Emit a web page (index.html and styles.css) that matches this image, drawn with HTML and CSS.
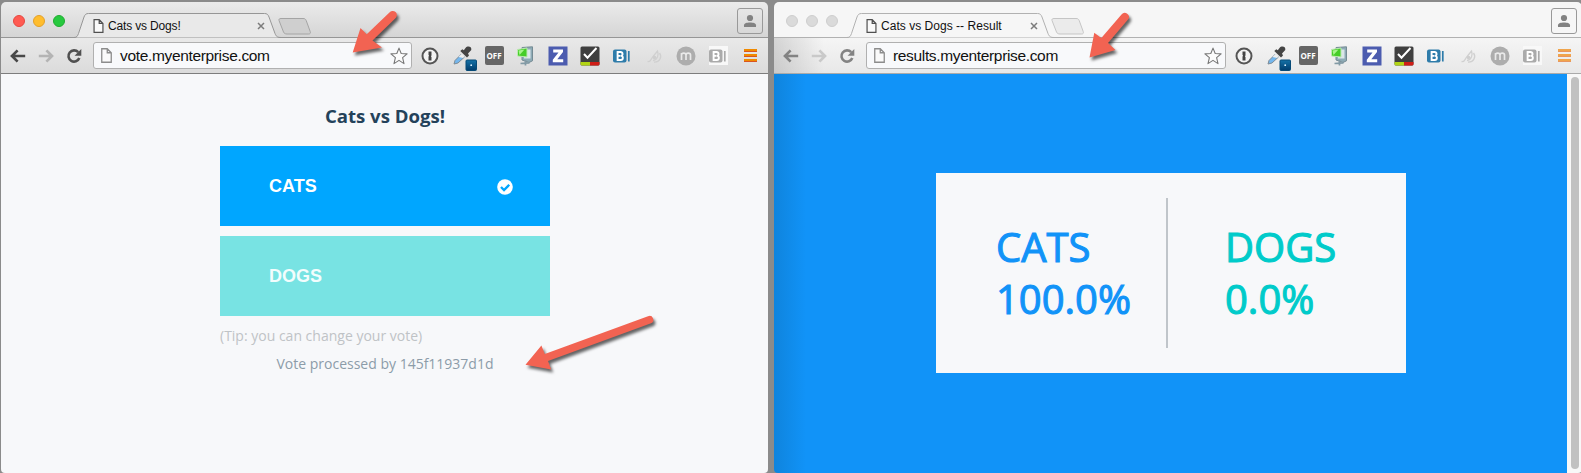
FILE: index.html
```html
<!DOCTYPE html>
<html lang="en">
<head>
<meta charset="utf-8">
<title>Cats vs Dogs!</title>
<link rel="stylesheet" href="styles.css">
</head>
<body>
<svg class="sprites" width="0" height="0">
  <defs>
    <linearGradient id="navy" x1="0" y1="0" x2="0" y2="1"><stop offset="0" stop-color="#1572a8"/><stop offset="1" stop-color="#003c6c"/></linearGradient>
  </defs>
  <symbol id="page" viewBox="0 0 11 15"><path d="M.75.75h5.500l4 4v9.500H.75zM6.250.75v4h4" fill="#fafafa" stroke="currentColor" stroke-width="1.300"/></symbol>
  <symbol id="close" viewBox="0 0 8 8"><path d="M1 1l6 6M7 1L1 7" stroke="#7c7c7c" stroke-width="1.500"/></symbol>
  <symbol id="back" viewBox="0 0 16 14"><path d="M15.200 7H2.500M7.600 1.400L2 7l5.600 5.600" fill="none" stroke="currentColor" stroke-width="2.700"/></symbol>
  <symbol id="reload" viewBox="0 0 16 16"><path d="M12.200 4.200A5.600 5.600 0 1 0 13.300 10" fill="none" stroke="currentColor" stroke-width="2.600"/><path d="M15.300 1v6.700H8.600z" fill="currentColor"/></symbol>
  <symbol id="star" viewBox="0 0 18 18"><path d="M9 1.100l2.200 5.400 5.900.4-4.500 3.800 1.400 5.900L9 13.400l-5 3.200 1.400-5.900L.9 6.900l5.900-.4z" fill="#fcfcfc" stroke="#777" stroke-width="1.100" stroke-linejoin="round"/></symbol>
  <symbol id="person" viewBox="0 0 14 14"><circle cx="7" cy="4" r="3.100" fill="#828282"/><path d="M1 13v-1.800C1 9.200 4 8.500 7 8.500s6 .7 6 2.700V13z" fill="#828282"/></symbol>
  <symbol id="onepass" viewBox="0 0 24 24"><circle cx="12" cy="12" r="7.500" fill="#f3f3f3" stroke="#555" stroke-width="2"/><path d="M10.500 7.500h3v4l-.7.700.7.800v3.500h-3v-4l.7-.8-.7-.7z" fill="#444"/></symbol>
  <symbol id="dropper" viewBox="0 0 28 28"><path d="M4 20l1-3.500 6.500-6.500 3 3L8 19z" fill="#74b7ee" stroke="#7d8b96" stroke-width="1"/><path d="M8.500 13l3.500-3.500 2.800 2.800-1.800 1.700z" fill="#eee"/><path d="M10.300 7l2-1.800 1.500 1L15.500 4c1.800-2.300 6.500-1.800 5.800 2L18 9.500l1 2-2 2z" fill="#454545"/><rect x="16" y="16" width="10.500" height="10.500" rx="1" fill="url(#navy)" stroke="#064a77"/><circle cx="21.200" cy="21.200" r=".9" fill="#dff3ff"/></symbol>
  <symbol id="disk" viewBox="0 0 24 24"><path d="M8 3.500l10.500-.7v14L15 18.500 8 16z" fill="#8eabb6" stroke="#758b94"/><path d="M10 5.500h6.500v9H10z" fill="#dbe6e9"/><path d="M3.500 5.500l9.500-1.500v9l-9.500-1z" fill="#45cd28" stroke="#bce9b1"/><path d="M4.500 6.500l6-1-5 5.500z" fill="#a6f48c"/><path d="M11.500 16v5.500M6.500 19.500l9-.6" stroke="#829aa5" stroke-width="1.700"/></symbol>
  <symbol id="zicon" viewBox="0 0 24 24"><path d="M2.500 2.500h19v19h-19z" fill="#4c5caf"/><path d="M7.200 5.500h9.800v2.600l-5.700 7.100h5.900v3.100H6.800v-2.600l5.700-7.100H7.200z" fill="#fff"/></symbol>
  <symbol id="check" viewBox="0 0 24 24"><rect x="2.500" y="2.500" width="19" height="19" rx="1.500" fill="#3f3f3f"/><path d="M2.500 18h9.500v3.500H3.500l-1-1z" fill="#b2d414"/><path d="M12 18h9.500v2.500l-1 1H12z" fill="#d01e17"/><path d="M6 10l3.500 3.800L18.500 4" fill="none" stroke="#fff" stroke-width="2"/></symbol>
  <symbol id="bline" viewBox="0 0 24 24"><rect x="3" y="5.500" width="13.500" height="13" rx="2" fill="currentColor"/><path d="M7.600 8v8h3.200c2.700 0 2.700-3.900.3-4.100 2-.3 2-3.900-.6-3.900zm0 3.900h3" fill="none" stroke="#fff" stroke-width="1.900"/><path d="M18.800 7v10.500" stroke="currentColor" stroke-width="1.700"/></symbol>
  <symbol id="faint" viewBox="0 0 24 24"><path d="M5.500 17.500c4 1 3-3 6-5.500l4-5c1.500 4 0 9-4.500 9.500M17.500 9c3 4 0 9.500-5.500 9" fill="none" stroke="#d0d0d0" stroke-width="1.300"/><circle cx="12.500" cy="13.500" r="1.800" fill="#cecece"/></symbol>
  <symbol id="micon" viewBox="0 0 24 24"><circle cx="12" cy="12" r="9.500" fill="#adadad"/><path d="M7.500 16V9M7.500 11c0-2.500 4.500-2.500 4.500 0v5M12 11c0-2.500 4.500-2.500 4.500 0v5" fill="none" stroke="#e9e9e9" stroke-width="1.700"/></symbol>
  <symbol id="arrows" viewBox="0 0 1581 473">
    <path d="M352.700 52.500L360.500 28l6.200 6.200L389.700 12.200a4 4 0 0 1 6 5.800L372.500 40.500 382 47.500z"/>
    <path d="M1089.500 57.500L1094.300 32.700l7 5.300L1121.500 14.500a4 4 0 0 1 6.500 5L1108 43l7.500 7z"/>
    <path d="M525.500 364.800L541.400 345.500l3.400 8.500L648 316.200a3.700 3.700 0 0 1 3 7L548 361l3.200 8.500z"/>
  </symbol>
</svg>

<main class="desktop">
  <section class="window vote-window">
    <header class="tabstrip">
      <div class="lights"><i class="red"></i><i class="amber"></i><i class="green"></i></div>
      <div class="tab">
        <svg class="tab-shape" viewBox="0 0 208 25"><path d="M-1 24.500c3 0 3.500-1.500 4.500-4L9 4C10 1.500 11 .5 13.500 .5h176c2.500 0 3.500 1 4.500 3.500l6 16.500c1 2.500 2 4 6 4" /></svg>
        <svg class="tab-page" width="11" height="14"><use href="#page"/></svg>
        <span class="tab-title">Cats vs Dogs!</span>
        <svg class="tab-close" width="8" height="8"><use href="#close"/></svg>
      </div>
      <svg class="newtab" width="33" height="17" viewBox="0 0 33 17"><path d="M3 .5h22c2 0 2.500.6 3.200 2l4 11c.6 1.500 0 2.500-1.500 2.500H9c-2 0-2.800-.6-3.500-2L1 2.500C.5 1.200 1.500.5 3 .5z"/></svg>
      <div class="profile"><svg width="14" height="14"><use href="#person"/></svg></div>
    </header>
    <nav class="toolbar">
      <svg class="nav-back" width="16" height="14"><use href="#back"/></svg>
      <svg class="nav-forward" width="16" height="14"><use href="#back"/></svg>
      <svg class="nav-reload" width="16" height="16"><use href="#reload"/></svg>
      <div class="omnibox">
        <svg class="url-page" width="11" height="15"><use href="#page"/></svg>
        <span class="url">vote.myenterprise.com</span>
        <svg width="18" height="18"><use href="#star"/></svg>
      </div>
      <div class="extensions">
        <svg width="24" height="24"><use href="#onepass"/></svg>
        <svg class="dropper" width="28" height="28"><use href="#dropper"/></svg>
        <b class="off">OFF</b>
        <svg width="24" height="24"><use href="#disk"/></svg>
        <svg width="24" height="24"><use href="#zicon"/></svg>
        <svg width="24" height="24"><use href="#check"/></svg>
        <svg class="b-blue" width="24" height="24"><use href="#bline"/></svg>
        <svg width="24" height="24"><use href="#faint"/></svg>
        <svg width="24" height="24"><use href="#micon"/></svg>
        <svg class="b-gray" width="24" height="24"><use href="#bline"/></svg>
      </div>
      <div class="menu"><i></i><i></i><i></i></div>
    </nav>
    <div class="page vote-page">
      <div class="poll">
        <h1>Cats vs Dogs!</h1>
        <button class="choice cats">CATS
          <svg width="16" height="16" viewBox="0 0 16 16"><circle cx="8" cy="8" r="7.800" fill="#fff"/><path d="M4 8l3 3 5.200-5.200" fill="none" stroke="#00a6ff" stroke-width="2.300"/></svg>
        </button>
        <button class="choice dogs">DOGS</button>
        <p class="tip">(Tip: you can change your vote)</p>
        <p class="processed">Vote processed by 145f11937d1d</p>
      </div>
    </div>
  </section>

  <section class="window result-window">
    <header class="tabstrip">
      <div class="lights"><i></i><i></i><i></i></div>
      <div class="tab">
        <svg class="tab-shape" viewBox="0 0 208 25"><path d="M-1 24.500c3 0 3.500-1.500 4.500-4L9 4C10 1.500 11 .5 13.500 .5h176c2.500 0 3.500 1 4.500 3.500l6 16.500c1 2.500 2 4 6 4" /></svg>
        <svg class="tab-page" width="11" height="14"><use href="#page"/></svg>
        <span class="tab-title">Cats vs Dogs -- Result</span>
        <svg class="tab-close" width="8" height="8"><use href="#close"/></svg>
      </div>
      <svg class="newtab" width="33" height="17" viewBox="0 0 33 17"><path d="M3 .5h22c2 0 2.500.6 3.200 2l4 11c.6 1.500 0 2.500-1.500 2.500H9c-2 0-2.800-.6-3.500-2L1 2.500C.5 1.200 1.500.5 3 .5z"/></svg>
      <div class="profile"><svg width="14" height="14"><use href="#person"/></svg></div>
    </header>
    <nav class="toolbar">
      <svg class="nav-back" width="16" height="14"><use href="#back"/></svg>
      <svg class="nav-forward" width="16" height="14"><use href="#back"/></svg>
      <svg class="nav-reload" width="16" height="16"><use href="#reload"/></svg>
      <div class="omnibox">
        <svg class="url-page" width="11" height="15"><use href="#page"/></svg>
        <span class="url">results.myenterprise.com</span>
        <svg width="18" height="18"><use href="#star"/></svg>
      </div>
      <div class="extensions">
        <svg width="24" height="24"><use href="#onepass"/></svg>
        <svg class="dropper" width="28" height="28"><use href="#dropper"/></svg>
        <b class="off">OFF</b>
        <svg width="24" height="24"><use href="#disk"/></svg>
        <svg width="24" height="24"><use href="#zicon"/></svg>
        <svg width="24" height="24"><use href="#check"/></svg>
        <svg class="b-blue" width="24" height="24"><use href="#bline"/></svg>
        <svg width="24" height="24"><use href="#faint"/></svg>
        <svg width="24" height="24"><use href="#micon"/></svg>
        <svg class="b-gray" width="24" height="24"><use href="#bline"/></svg>
      </div>
      <div class="menu"><i></i><i></i><i></i></div>
    </nav>
    <div class="page result-page">
      <div class="result-area">
        <div class="card">
          <div class="score score-cats"><span>CATS</span><span>100.0%</span></div>
          <div class="divider"></div>
          <div class="score score-dogs"><span>DOGS</span><span>0.0%</span></div>
        </div>
      </div>
      <div class="scrollbar"><i></i></div>
    </div>
  </section>
</main>
<svg class="arrows" width="1581" height="473"><use href="#arrows"/></svg>
</body>
</html>
```

FILE: styles.css
```css
* { box-sizing: border-box; }
html, body { height: 100%; }
body { margin: 0; overflow: hidden; background: #8b8b8b; font-family: "Liberation Sans", Arial, sans-serif; }
svg { display: block; flex: none; }
.sprites { position: absolute; }

.desktop { display: flex; gap: 6px; width: 1582px; height: 473px; padding: 2px 0 0 1px; }
.window { display: flex; flex-direction: column; height: 471px; overflow: hidden; border-radius: 5px 5px 4px 4px; }
.vote-window { flex: none; width: 767px; }
.result-window { flex: none; width: 808px; }

/* tab strip */
.tabstrip { display: flex; align-items: flex-start; flex: none; height: 36px; border-bottom: 1px solid #969696; background: linear-gradient(#ebebeb, #d5d5d5); }
.result-window .tabstrip { background: #f6f6f6; border-color: #b1b1b1; }
.lights { display: flex; gap: 8px; padding: 13px 0 0 12px; width: 74px; flex: none; }
.lights i { width: 12px; height: 12px; border-radius: 50%; background: #dadada; border: 1px solid #cecece; }
.lights .red { background: #ff5b52; border-color: #e64840; }
.lights .amber { background: #ffbd2e; border-color: #e3a02a; }
.lights .green { background: #27c93f; border-color: #20ac31; }
.tab { position: relative; flex: none; display: flex; align-items: center; width: 208px; height: 25px; margin-top: 11px; padding: 0 18px 0 18px; }
.tab-shape { position: absolute; left: 0; top: 0; width: 208px; height: 25px; overflow: visible; fill: #e9e9e9; stroke: #969696; }
.result-window .tab-shape { fill: #f6f6f6; stroke: #b1b1b1; }
.tab-page { position: relative; color: #505050; }
.tab-title { position: relative; flex: 1; margin-left: 4px; padding-top: 1px; font-size: 12px; letter-spacing: -.16px; white-space: nowrap; color: #111; }
.result-window .tab-title { letter-spacing: .03px; }
.tab-close { position: relative; }
.newtab { margin: 16px 0 0 -5px; fill: #cfcfcf; stroke: #a4a4a4; }
.result-window .newtab { fill: #ebebeb; stroke: #c5c5c5; }
.profile { display: grid; place-items: center; width: 26px; height: 26px; margin: 6px 5px 0 auto; border: 1px solid #999; border-radius: 3px; }

/* toolbar */
.toolbar { display: flex; align-items: center; flex: none; height: 36px; padding: 0 11px 0 9px; border-bottom: 1px solid #7d7d7d; background: linear-gradient(#e9e9e9, #dbdbdb); }
.result-window .toolbar { background: linear-gradient(90deg, #0002, #0000 50px), linear-gradient(#f5f5f5, #e8e8e8); border-color: #aaa; }
.nav-back { color: #484848; }
.nav-forward { margin-left: 12px; color: #b4b4b4; transform: scaleX(-1); }
.nav-reload { margin-left: 12px; color: #505050; }
.result-window .nav-back, .result-window .nav-reload { color: #838383; }
.result-window .nav-forward { color: #c9c9c9; }
.omnibox { display: flex; flex: 1; align-items: center; height: 27px; margin-left: 11px; padding: 0 3px 0 7px; border: 1px solid #b0b0b0; border-radius: 3px; background: #f8f9fb; }
.url-page { color: #8c8c8c; }
.url { flex: 1; margin-left: 8px; font-size: 15.5px; letter-spacing: -.34px; color: #111; }
.extensions { display: flex; align-items: center; gap: 8px; margin-left: 6px; }
.dropper { margin: 0 -4px -4px 0; }
.off { width: 19px; height: 19px; margin: 0 2.5px; border-radius: 2px; background: #666; color: #fff; font: bold 8px/19px "Open Sans", sans-serif; text-align: center; }
.b-blue { color: #2e7caa; }
.b-gray { color: #aaa; background: linear-gradient(#f8f8f8, #f8f8f8) center / 19px 19px no-repeat; }
.menu { display: flex; flex-direction: column; gap: 2px; width: 13px; margin-left: 14px; }
.menu i { height: 3px; background: #f08a00; border-bottom: 1px solid #d95522; }
.result-window .menu i { background: #f0a54c; border-color: #e89660; }

/* voting page */
.page { flex: 1; min-height: 0; font-family: "Open Sans", sans-serif; }
.vote-page { background: #f7f8fa; }
.poll { width: 330px; margin-left: 219px; padding-top: 29px; }
.poll h1 { margin: 0 0 17px; font-size: 18.6px; line-height: 26px; text-align: center; color: #24425a; }
.choice { display: flex; align-items: center; justify-content: space-between; width: 330px; height: 80px; margin: 0 0 10px; padding: 0 37px 0 49px; border: 0; font: bold 18px "Liberation Sans", Arial, sans-serif; color: #fff; }
.choice svg { margin-top: 1px; }
.cats { background: #00a6ff; }
.dogs { background: #78e3e3; color: #f2fdfd; }
.tip { margin: 0; font-size: 14px; line-height: 20px; color: #bfc3c6; white-space: nowrap; }
.processed { margin: 8px 0 0; font-size: 14px; line-height: 20px; text-align: center; color: #8c9ca9; }

/* result page */
.result-page { display: flex; }
.result-area { flex: 1; padding: 99px 0 0 162px; background: linear-gradient(90deg, #0f84dd, #1193f8 32px); }
.card { display: flex; width: 470px; height: 200px; padding: 25px 0; background: #f7f8fa; }
.score { display: flex; flex-direction: column; justify-content: center; font-size: 40px; line-height: 52px; -webkit-text-stroke: 1.1px currentColor; }
.score-cats { width: 230px; padding-left: 60px; color: #1193f8; }
.score-dogs { padding-left: 57px; color: #00cbca; }
.divider { width: 2px; height: 150px; background: #c0c5ca; }
.scrollbar { width: 15px; padding: 3px 0 0 4px; background: #f8f8f8; }
.scrollbar i { display: block; width: 8px; height: 392px; border-radius: 4px; background: #c1c1c1; }

.arrows { position: absolute; left: 0; top: 0; pointer-events: none; fill: #f26352; filter: drop-shadow(2px 3px 1.5px rgba(0, 0, 0, .6)); }
```
